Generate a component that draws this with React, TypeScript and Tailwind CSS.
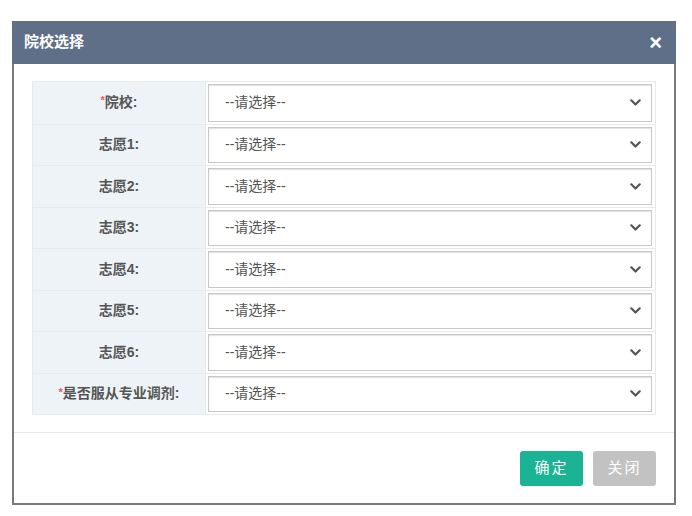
const rows = [
    { label: '院校:', required: true },
    { label: '志愿1:' },
    { label: '志愿2:' },
    { label: '志愿3:' },
    { label: '志愿4:' },
    { label: '志愿5:' },
    { label: '志愿6:' },
    { label: '是否服从专业调剂:', required: true },
]

const Chevron = () => (
    <svg width="11" height="7" viewBox="0 0 11 7" className="text-[#555]">
        <path d="M1.3 1.3 L5.5 5.5 L9.7 1.3" fill="none" stroke="currentColor" strokeWidth="2.2" strokeLinecap="round" strokeLinejoin="round" />
    </svg>
)

export default function App() {
    return (
        <div className="w-[692px] h-[516px] bg-white pt-[21px] pl-[12px] font-['Liberation_Sans','Noto_Sans_CJK_SC',sans-serif]">
            <div className="w-[664px] h-[484px] border-2 border-t-0 border-[#7a7a7a] bg-white flex flex-col">
                {/* Header */}
                <div className="h-[43px] bg-[#5f6f88] flex items-center justify-between pl-[12px] pr-[14px] -mx-[2px]">
                    <span className="text-white text-[15px] font-bold">院校选择</span>
                    <span className="text-white text-[22px] font-bold leading-none">×</span>
                </div>

                {/* Body */}
                <div className="pt-[17px] px-[18px] pb-[17px] border-b border-[#e7eaec]">
                    <div className="border border-[#e7eaec]">
                        {rows.map((r, i) => (
                            <div key={i} className={`flex h-[41.5px] ${i > 0 ? 'border-t border-[#e7eaec]' : ''}`}>
                                <div className="w-[173px] bg-[#edf3f6] flex items-center justify-center text-[14px] font-bold text-[#555] border-r border-[#e7eaec]">
                                    {r.required && <span className="text-[#ed5565] text-[11px] self-start mt-[10px]">*</span>}
                                    {r.label}
                                </div>
                                <div className="flex-1 p-[2px] pr-[3px]">
                                    <div className="h-full border border-[#c8c8c8] shadow-[inset_0_1px_1px_rgba(0,0,0,0.12)] flex items-center justify-between pl-[16px] pr-[10px] text-[14px] text-[#555]">
                                        <span>--请选择--</span>
                                        <Chevron />
                                    </div>
                                </div>
                            </div>
                        ))}
                    </div>
                </div>

                {/* Footer */}
                <div className="flex-1 flex items-start justify-end gap-[10px] pt-[18px] pr-[18px]">
                    <button className="w-[63px] h-[35px] rounded-[3px] bg-[#1ab394] text-white text-[15px] tracking-[2px]">确定</button>
                    <button className="w-[63px] h-[35px] rounded-[3px] bg-[#c2c2c2] text-white text-[15px] tracking-[2px]">关闭</button>
                </div>
            </div>
        </div>
    )
}
